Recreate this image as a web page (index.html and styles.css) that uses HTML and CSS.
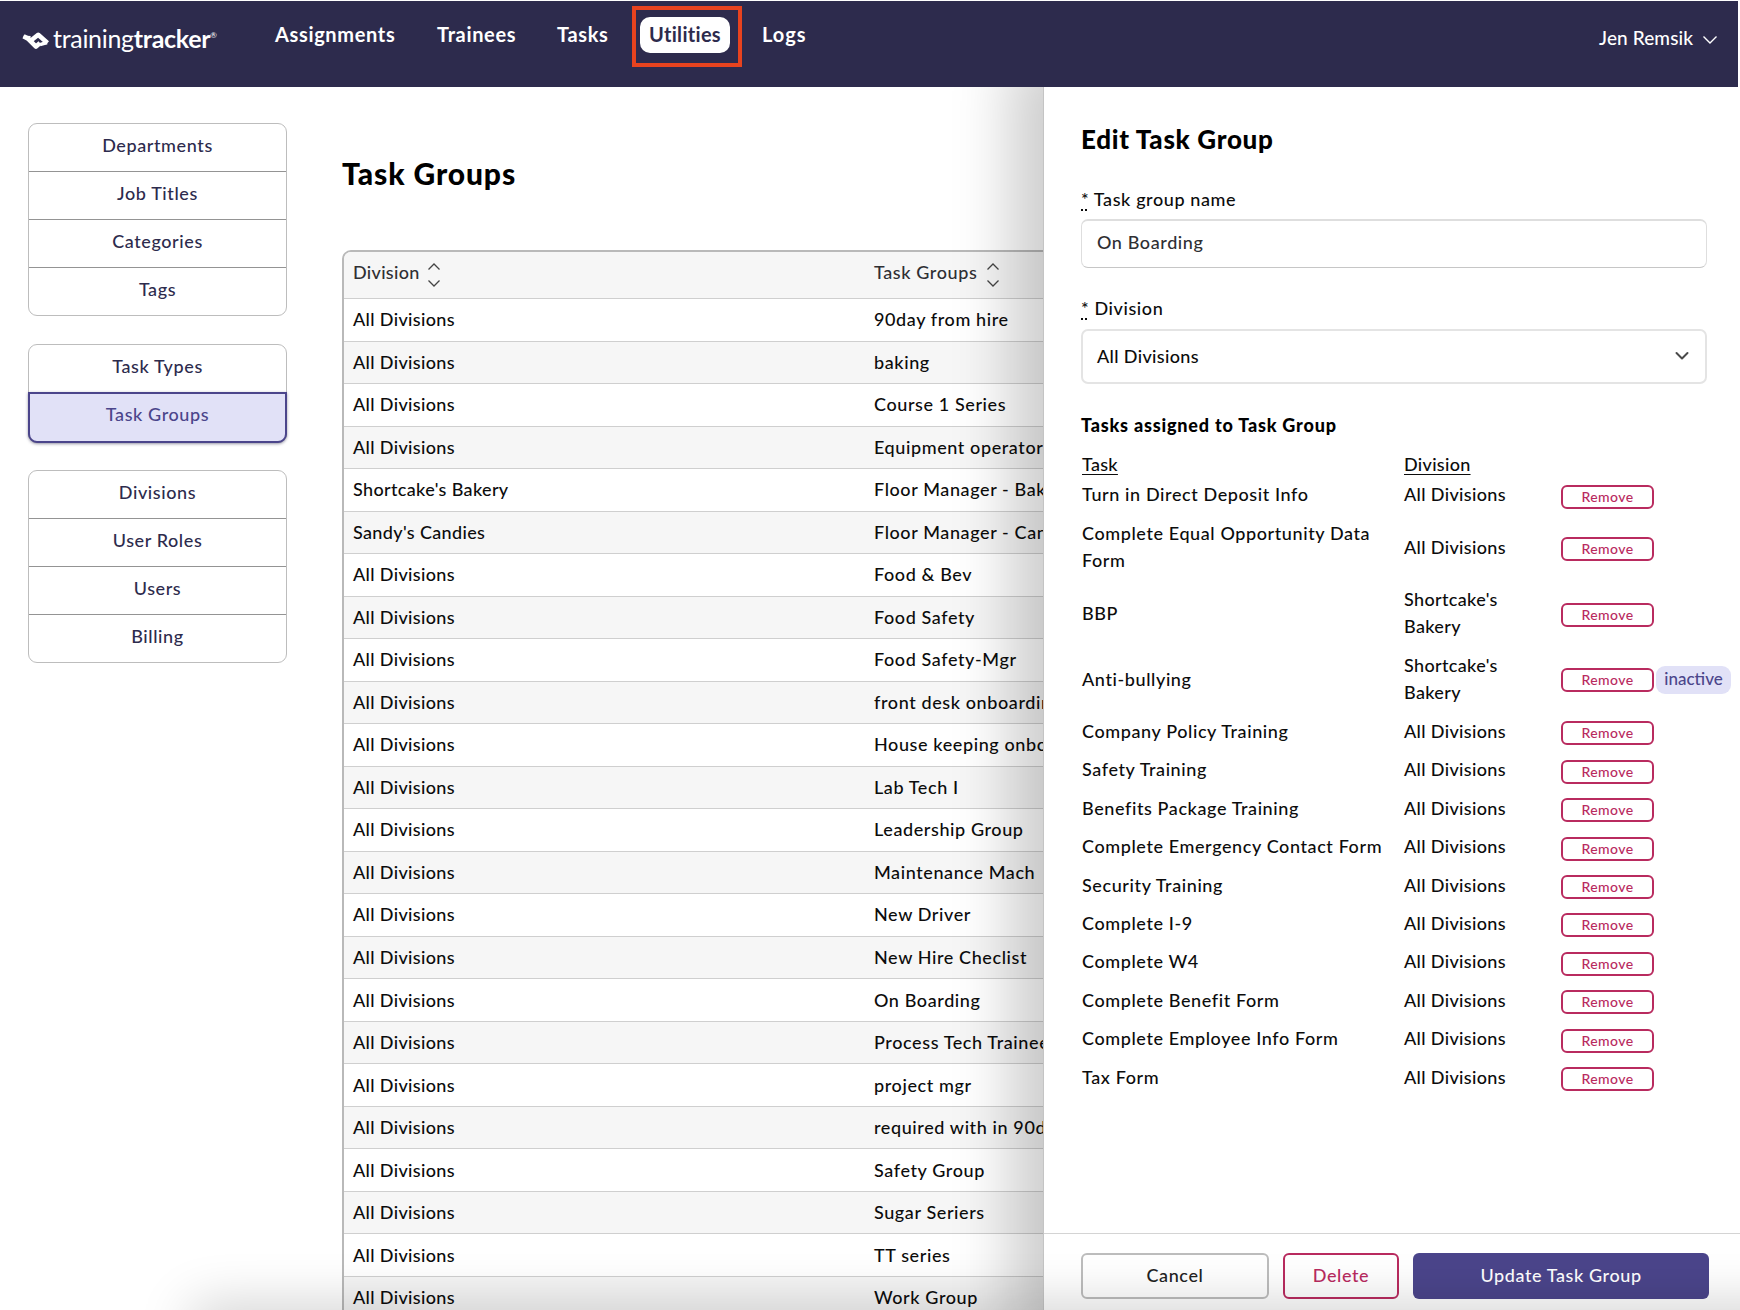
FILE: index.html
```html
<!DOCTYPE html>
<html lang="en">
    <head>
        <meta charset="utf-8">
        <title>Task Groups</title>
        <link rel="stylesheet" href="styles.css">
    </head>
    <body>
        <header class="topbar">
            <a class="logo">
                <svg width="27" height="20" viewBox="0 0 27 20" fill="none" stroke="#fff" stroke-width="4.6" stroke-linejoin="round">
                    <path d="M1.500 5.200 6 7.600l8 8 4-3.500"/>
                    <path d="M25.500 12l-9.300-8.200-8.200 6.500"/>
                    <path d="M25 11.500l-7 2.200" stroke-width="3.500"/>
                    <path d="M1.500 6l7 .5" stroke-width="3"/>
                </svg>
                <span class="logo-text">training<b>tracker</b><sup>®</sup></span>
            </a>
            <nav class="nav">
                <a class="nav-assignments">Assignments</a>
                <a class="nav-trainees">Trainees</a>
                <a class="nav-tasks">Tasks</a>
                <span class="highlight"><a class="current">Utilities</a></span>
                <a class="nav-logs">Logs</a>
            </nav>
            <a class="user">Jen Remsik
                <svg width="16" height="10" viewBox="0 0 16 10" fill="none" stroke="#fff" stroke-width="1.4"><path d="M1.500 1.500 8 8l6.500-6.500"/></svg>
            </a>
        </header>

        <div class="page">
            <aside class="sidebar">
                <ul class="menu">
                    <li>Departments</li>
                    <li>Job Titles</li>
                    <li>Categories</li>
                    <li>Tags</li>
                </ul>
                <ul class="menu">
                    <li>Task Types</li>
                    <li class="active">Task Groups</li>
                </ul>
                <ul class="menu">
                    <li>Divisions</li>
                    <li>User Roles</li>
                    <li>Users</li>
                    <li>Billing</li>
                </ul>
            </aside>

            <main class="content">
                <h1>Task Groups</h1>
                <table class="groups">
                    <thead>
                        <tr>
                            <th>Division <svg class="sort" width="14" height="26" viewBox="0 0 14 26"><path d="M1.500 7.500 7 2l5.500 5.500M1.500 18.500 7 24l5.500-5.500"/></svg></th>
                            <th>Task Groups <svg class="sort" width="14" height="26" viewBox="0 0 14 26"><path d="M1.500 7.500 7 2l5.500 5.500M1.500 18.500 7 24l5.500-5.500"/></svg></th>
                        </tr>
                    </thead>
                    <tbody>
                        <tr><td>All Divisions</td><td>90day from hire</td></tr>
                        <tr><td>All Divisions</td><td>baking</td></tr>
                        <tr><td>All Divisions</td><td>Course 1 Series</td></tr>
                        <tr><td>All Divisions</td><td>Equipment operator</td></tr>
                        <tr><td>Shortcake's Bakery</td><td>Floor Manager - Bakery</td></tr>
                        <tr><td>Sandy's Candies</td><td>Floor Manager - Candies</td></tr>
                        <tr><td>All Divisions</td><td>Food &amp; Bev</td></tr>
                        <tr><td>All Divisions</td><td>Food Safety</td></tr>
                        <tr><td>All Divisions</td><td>Food Safety-Mgr</td></tr>
                        <tr><td>All Divisions</td><td>front desk onboarding</td></tr>
                        <tr><td>All Divisions</td><td>House keeping onboarding</td></tr>
                        <tr><td>All Divisions</td><td>Lab Tech I</td></tr>
                        <tr><td>All Divisions</td><td>Leadership Group</td></tr>
                        <tr><td>All Divisions</td><td>Maintenance Mach</td></tr>
                        <tr><td>All Divisions</td><td>New Driver</td></tr>
                        <tr><td>All Divisions</td><td>New Hire Checlist</td></tr>
                        <tr><td>All Divisions</td><td>On Boarding</td></tr>
                        <tr><td>All Divisions</td><td>Process Tech Trainee</td></tr>
                        <tr><td>All Divisions</td><td>project mgr</td></tr>
                        <tr><td>All Divisions</td><td>required with in 90days</td></tr>
                        <tr><td>All Divisions</td><td>Safety Group</td></tr>
                        <tr><td>All Divisions</td><td>Sugar Seriers</td></tr>
                        <tr><td>All Divisions</td><td>TT series</td></tr>
                        <tr><td>All Divisions</td><td>Work Group</td></tr>
                    </tbody>
                </table>
            </main>
        </div>

        <section class="drawer">
            <div class="drawer-body">
                <h2>Edit Task Group</h2>
                <label class="label" for="name"><abbr>*</abbr> Task group name</label>
                <input class="input" type="text" id="name" value="On Boarding">
                <label class="label" for="division"><abbr>*</abbr> Division</label>
                <div class="select" id="division">All Divisions
                    <svg width="16" height="10" viewBox="0 0 16 10" fill="none" stroke="#4a4a4a" stroke-width="2" stroke-linecap="round" stroke-linejoin="round"><path d="M2.500 2 8 7.500 13.500 2"/></svg>
                </div>
                <h3>Tasks assigned to Task Group</h3>
                <table class="tasks">
                    <thead>
                        <tr><th>Task</th><th>Division</th><th></th></tr>
                    </thead>
                    <tbody>
                        <tr><td>Turn in Direct Deposit Info</td><td>All Divisions</td><td><button class="remove">Remove</button></td></tr>
                        <tr><td>Complete Equal Opportunity Data<br>Form</td><td>All Divisions</td><td><button class="remove">Remove</button></td></tr>
                        <tr><td>BBP</td><td>Shortcake's<br>Bakery</td><td><button class="remove">Remove</button></td></tr>
                        <tr><td>Anti-bullying</td><td>Shortcake's<br>Bakery</td><td><button class="remove">Remove</button><span class="badge">inactive</span></td></tr>
                        <tr><td>Company Policy Training</td><td>All Divisions</td><td><button class="remove">Remove</button></td></tr>
                        <tr><td>Safety Training</td><td>All Divisions</td><td><button class="remove">Remove</button></td></tr>
                        <tr><td>Benefits Package Training</td><td>All Divisions</td><td><button class="remove">Remove</button></td></tr>
                        <tr><td>Complete Emergency Contact Form</td><td>All Divisions</td><td><button class="remove">Remove</button></td></tr>
                        <tr><td>Security Training</td><td>All Divisions</td><td><button class="remove">Remove</button></td></tr>
                        <tr><td>Complete I-9</td><td>All Divisions</td><td><button class="remove">Remove</button></td></tr>
                        <tr><td>Complete W4</td><td>All Divisions</td><td><button class="remove">Remove</button></td></tr>
                        <tr><td>Complete Benefit Form</td><td>All Divisions</td><td><button class="remove">Remove</button></td></tr>
                        <tr><td>Complete Employee Info Form</td><td>All Divisions</td><td><button class="remove">Remove</button></td></tr>
                        <tr><td>Tax Form</td><td>All Divisions</td><td><button class="remove">Remove</button></td></tr>
                    </tbody>
                </table>
            </div>
            <footer class="drawer-footer">
                <button class="btn cancel">Cancel</button>
                <button class="btn delete">Delete</button>
                <button class="btn update">Update Task Group</button>
            </footer>
        </section>
        <div class="bottom-shade"></div>
    </body>
</html>
```
FILE: styles.css
```css
* { box-sizing: border-box; }
html, body { height: 100%; }
body {
    margin: 0;
    padding-top: 1px;
    overflow: hidden;
    position: relative;
    background: #fff;
    color: #0c0c0c;
    font-family: Lato, "Liberation Sans", sans-serif;
    font-size: 18px;
    font-weight: 500;
    letter-spacing: 0.6px;
}
button, input { font: inherit; letter-spacing: inherit; }

/* top bar */
.topbar {
    display: flex;
    align-items: flex-start;
    height: 86px;
    margin-right: 2px;
    padding-left: 22px;
    background: #2d2b4d;
    color: #fff;
}
.logo { display: flex; width: 253px; padding-top: 23px; }
.logo svg { margin-top: 7px; }
.logo-text { margin-left: 4px; font-size: 25px; line-height: 29px; font-weight: 400; letter-spacing: -0.3px; white-space: nowrap; }
.logo-text sup { font-size: 8px; font-weight: 400; line-height: 0; vertical-align: 10px; }
.nav { display: flex; font-size: 20px; font-weight: 700; line-height: 24px; letter-spacing: 0.65px; }
.nav > a { padding-top: 21px; }
.nav-assignments { width: 162px; }
.nav-trainees { width: 120px; }
.nav-tasks { width: 75px; }
.highlight { height: 61px; width: 110px; margin-top: 5px; padding: 7px 8px 0 4px; border: 4px solid #e8431f; }
.current { display: block; height: 36px; line-height: 34px; text-align: center; letter-spacing: 0.3px; border-radius: 10px; background: #fff; color: #2d2b4d; }
.nav-logs { margin-left: 20px; letter-spacing: 1px; }
.user { margin-left: auto; padding: 25px 20px 0 0; font-size: 19px; line-height: 24px; letter-spacing: 0.1px; }
.user svg { margin-left: 4px; }

/* side menu */
.page { display: flex; }
.sidebar { width: 342px; padding: 36px 0 0 28px; }
.menu { width: 259px; margin: 0 0 28px; padding: 0; list-style: none; border: 1px solid #bdbdbd; border-radius: 9px; }
.menu + .menu { margin-bottom: 27px; }
.menu li { height: 48px; line-height: 42px; text-align: center; color: #2d2b4d; border-bottom: 1px solid #949494; }
.menu li:last-child { height: 47px; border-bottom: 0; }
.menu li.active {
    height: 51px;
    margin: -1px -1px -1px;
    line-height: 41px;
    background: #e1e1f7;
    color: #4b458b;
    border: 2px solid #4b458b;
    border-radius: 0 0 9px 9px;
    box-shadow: 0 1px 3px rgba(45, 43, 77, 0.5);
}

/* list of groups */
.content { flex: 1; padding-top: 68px; }
h1 { margin: 0 0 59px; font-size: 30px; line-height: 36px; font-weight: 900; letter-spacing: 0.9px; color: #000; }
.groups { width: 1382px; table-layout: fixed; border-collapse: separate; border-spacing: 0; border: 2px solid #b9b9b9; border-radius: 9px 0 0 0; white-space: nowrap; }
.groups th { height: 47px; padding: 0 9px 2px; text-align: left; font-weight: 500; color: #2f2f33; background: #f6f6f6; border-bottom: 1px solid #cfcfcf; }
.groups th:first-child { width: 521px; border-radius: 7px 0 0 0; letter-spacing: 0.3px; }
.groups td { height: 42.53px; padding: 0 9px 1px; line-height: 24px; border-bottom: 1px solid #cfcfcf; }
.groups td:first-child { letter-spacing: 0.35px; }
.groups tr:nth-child(even) td { background: #f6f6f6; }
.sort { margin-left: 3px; vertical-align: -9px; fill: none; stroke: #444; stroke-width: 1.3; }

/* edit panel lies over the list */
.drawer {
    position: absolute;
    top: 87px;
    right: 0;
    bottom: 0;
    width: 697px;
    display: flex;
    flex-direction: column;
    background: #fff;
    border-left: 1px solid #c4c4c4;
    box-shadow: 0 0 56px 32px rgba(0, 0, 0, 0.2);
    clip-path: inset(0 0 0 -120px);
}
.drawer-body { flex: 1; padding: 37px 33px 0 37px; }
h2 { margin: 0 0 32px; font-size: 26px; line-height: 31px; font-weight: 900; letter-spacing: 0.7px; color: #000; }
.label { display: block; height: 24px; line-height: 24px; margin-bottom: 8px; }
.label abbr { text-decoration: underline dotted 2px; text-underline-offset: 3px; }
.input { display: block; width: 626px; height: 49px; margin-bottom: 28px; padding: 0 15px 5px; border: 1px solid #dedede; border-top-width: 2px; border-bottom-color: #c6c6c6; border-radius: 7px; color: #2f2f33; background: #fff; }
.select { display: flex; align-items: center; justify-content: space-between; width: 626px; height: 55px; margin-top: 9px; padding: 0 15px 2px 14px; border: 2px solid #e4e4e4; border-radius: 7px; letter-spacing: 0.35px; }
h3 { margin: 29px 0 15px; font-size: 18px; line-height: 24px; font-weight: 900; letter-spacing: 0.8px; color: #000; }
.tasks { width: 660px; table-layout: fixed; border-collapse: separate; border-spacing: 0; white-space: nowrap; }
.tasks th { height: 24px; padding: 0 0 0 1px; line-height: 22px; text-align: left; font-weight: 500; letter-spacing: 0.3px; text-decoration: underline; text-underline-offset: 3px; }
.tasks th:nth-child(1) { width: 322px; }
.tasks th:nth-child(2) { width: 157px; }
.tasks td { height: 38.45px; padding: 5.4px 0 5.4px 1px; line-height: 27.6px; vertical-align: middle; }
.tasks td:nth-child(2) { letter-spacing: 0.35px; }
.tasks td:last-child { padding: 0 0 0 1px; }
.remove { width: 93px; height: 24px; padding: 0; font-size: 14px; line-height: 20px; letter-spacing: 0.4px; vertical-align: middle; color: #b92b5f; background: #fff; border: 2px solid #b92b5f; border-radius: 6px; }
.badge { display: inline-block; width: 75px; height: 28px; margin-left: 2px; line-height: 26px; text-align: center; font-size: 17px; letter-spacing: 0; vertical-align: middle; border-radius: 9px; background: #e1e1f7; color: #4b458b; }

.drawer-footer { display: flex; gap: 14px; height: 77px; padding: 19px 0 0 37px; border-top: 1px solid #d4d4d4; }
.btn { height: 46px; padding: 0 0 2px; border-radius: 6px; font-size: 18px; background: #fff; }
.cancel { width: 188px; border: 2px solid #bdbdbd; color: #222; }
.delete { width: 116px; border: 2px solid #b92b5f; color: #b92b5f; }
.update { width: 296px; border: 0; background: #4b458b; color: #fff; }

/* soft shade rising from the bottom edge */
.bottom-shade { position: absolute; left: 196px; right: -60px; bottom: -40px; height: 40px; box-shadow: 0 0 54px 4px rgba(0, 0, 0, 0.2); pointer-events: none; }
```
